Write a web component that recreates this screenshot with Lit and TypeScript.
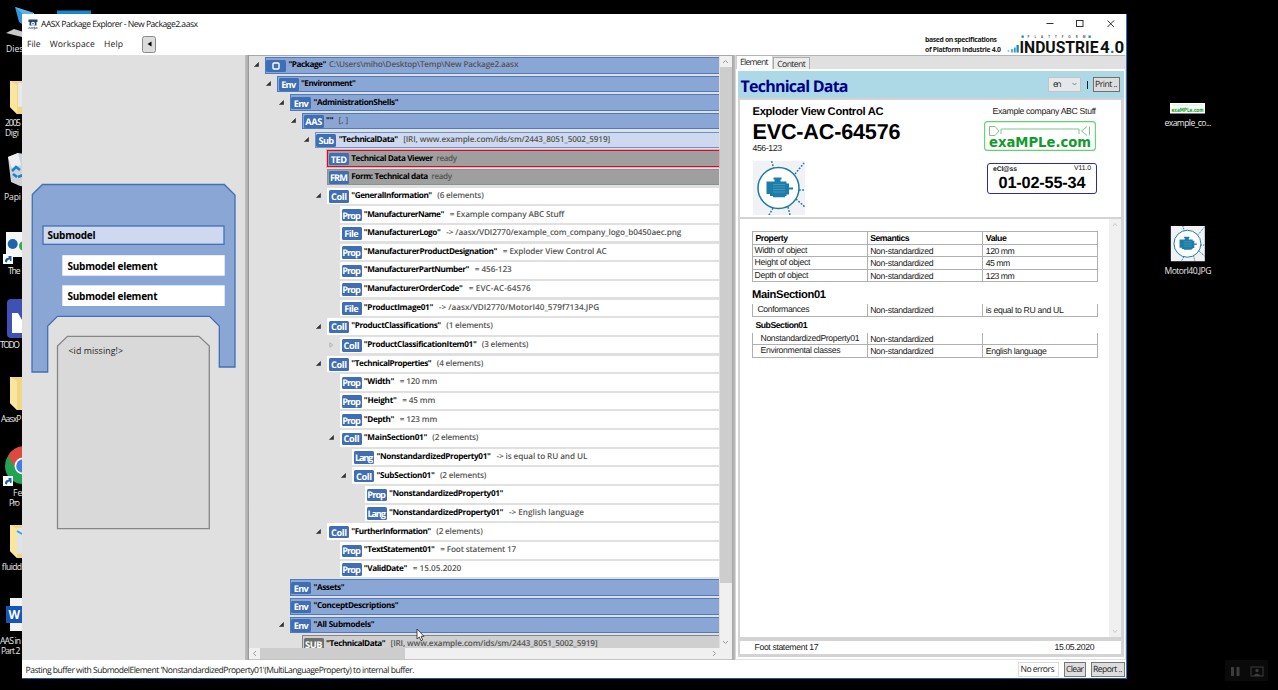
import { LitElement, html, css, svg, nothing } from "lit";
import { customElement, property } from "lit/decorators.js";

/** A line of text tracked so that it spans a given width. */
@customElement("fit-text")
class FitText extends LitElement {
  @property() text = "";
  @property({ type: Number }) w = 0;
  static styles = css`
    :host { display: inline-block; white-space: pre; text-rendering: geometricPrecision; }
    span { display: inline-block; }
  `;
  render() { return html`<span>${this.text}</span>`; }
  updated() {
    const s = this.renderRoot.querySelector("span") as HTMLElement;
    s.style.letterSpacing = "0px";
    const n = s.getBoundingClientRect().width;
    const len = Math.max(1, this.text.length - 1);
    s.style.letterSpacing = (this.w - n) / len + "px";
    this.style.width = this.w + "px";
  }
}

const t = (text: string, w: number) => html`<fit-text .text=${text} .w=${w}></fit-text>`;

type Row = [level: number, badge: string, open: number, kind: string, name: string, nameW: number, gap?: number, extra?: string, extraW?: number];
const rows: Row[] = [
  [0, "", 1, "env", '"Package"', 38, 2.5, "C:\\Users\\miho\\Desktop\\Temp\\New Package2.aasx", 189.5],
  [1, "Env", 1, "env", '"Environment"', 55],
  [2, "Env", 1, "env", '"AdministrationShells"', 85],
  [3, "AAS", 1, "env", '""', 7.5, 5, "[, ]", 9.5],
  [4, "Sub", 1, "sub", '"TechnicalData"', 59.5, 5, "[IRI, www.example.com/ids/sm/2443_8051_5002_5919]", 207],
  [5, "TED", 0, "plug sel", "Technical Data Viewer", 82, 3, "ready", 21],
  [5, "FRM", 0, "plug", "Form: Technical data", 77, 3, "ready", 21],
  [5, "Coll", 1, "", '"GeneralInformation"', 81, 5, "(6 elements)", 46.5],
  [6, "Prop", 0, "", '"ManufacturerName"', 80.5, 5.5, "= Example company ABC Stuff", 114.5],
  [6, "File", 0, "", '"ManufacturerLogo"', 77, 5.5, "-> /aasx/VDI2770/example_com_company_logo_b0450aec.png", 235],
  [6, "Prop", 0, "", '"ManufacturerProductDesignation"', 133.5, 5.5, "= Exploder View Control AC", 104],
  [6, "Prop", 0, "", '"ManufacturerPartNumber"', 105.5, 5.5, "= 456-123", 37],
  [6, "Prop", 0, "", '"ManufacturerOrderCode"', 99, 6, "= EVC-AC-64576", 62],
  [6, "File", 0, "", '"ProductImage01"', 69.5, 5.5, "-> /aasx/VDI2770/MotorI40_579f7134.JPG", 160.5],
  [5, "Coll", 1, "", '"ProductClassifications"', 90, 5, "(1 elements)", 46.5],
  [6, "Coll", 2, "", '"ProductClassificationItem01"', 113, 5, "(3 elements)", 46.5],
  [5, "Coll", 1, "", '"TechnicalProperties"', 80.5, 5, "(4 elements)", 46.5],
  [6, "Prop", 0, "", '"Width"', 30.5, 5.5, "= 120 mm", 37.5],
  [6, "Prop", 0, "", '"Height"', 33, 5.5, "= 45 mm", 33],
  [6, "Prop", 0, "", '"Depth"', 30.5, 5.5, "= 123 mm", 37.5],
  [6, "Coll", 1, "", '"MainSection01"', 63.5, 5, "(2 elements)", 46],
  [7, "Lang", 0, "", '"NonstandardizedProperty01"', 114.5, 5.5, "-> is equal to RU and UL", 91],
  [7, "Coll", 1, "", '"SubSection01"', 58.5, 5, "(2 elements)", 46.5],
  [8, "Prop", 0, "", '"NonstandardizedProperty01"', 114.5],
  [8, "Lang", 0, "", '"NonstandardizedProperty01"', 114.5, 5.5, "-> English language", 75],
  [5, "Coll", 1, "", '"FurtherInformation"', 80, 5, "(2 elements)", 46.5],
  [6, "Prop", 0, "", '"TextStatement01"', 71, 5.5, "= Foot statement 17", 76],
  [6, "Prop", 0, "", '"ValidDate"', 43.5, 5.5, "= 15.05.2020", 48.5],
  [2, "Env", 0, "env", '"Assets"', 31],
  [2, "Env", 0, "env", '"ConceptDescriptions"', 85],
  [2, "Env", 1, "env", '"All Submodels"', 61],
  [3, "SUB", 0, "ref", '"TechnicalData"', 59.5, 5, "[IRI, www.example.com/ids/sm/2443_8051_5002_5919]", 207],
];

const badgeWidths: Record<string, number> = { Env: 15, AAS: 17, Sub: 15.5, TED: 16.5, FRM: 18, Coll: 16, Prop: 18.6, File: 14.5, Lang: 18.4, SUB: 17.5 };

const motor = svg`
  <rect width="52" height="54" fill="#f0f2f5"/>
  <g stroke="#1d7ba3" stroke-width="1.5" stroke-dasharray="1.8 1.4" fill="none">
    <path d="M21 8L18.500 0M42 13L51 2M46 29H52M43 38L52 46M35 46L37 54M20 47L16 54"/>
  </g>
  <circle cx="25.500" cy="27" r="20.500" fill="#fff" stroke="#1d7ba3" stroke-width="1.500"/>
  <path fill="#1b7da8" d="M13.500 20.500h8v-2h-1v-2h8v2h-1v2h6v2h2.500v4h4v2h-4v5h-2.500v1.500h-1.500v1.200h-12v-1.200h-3v-2h-3.500z"/>
  <path stroke="#4f9dc0" stroke-width=".8" d="M20 23.500h12M20 26h12M20 28.500h12M20 31h12"/>
`;

@customElement("desktop-icons")
class DesktopIcons extends LitElement {
  static styles = css`
    :host { display: block; }
    svg { display: block; }
    text { font: 8.6px "Open Sans", sans-serif; fill: #e8e8e8; }
    .w { font-weight: 700; font-size: 12px; fill: #fff; }
    .ex { font: bold 6px "DejaVu Sans", sans-serif; fill: #15a52a; }
  `;
  render() {
    const link = (y: number) => svg`<rect x="3" y=${y} width="10" height="10" fill="#fff"/><path d=${`M5 ${y + 8}q0-4 2.500-4h1v-2h3v5h-1.500v-1.500q-3 0-3 3z`} fill="#1f5fa8"/>`;
    return html`<svg width="1278" height="690">
      <rect width="1278" height="690" fill="#000"/>
      <path d="M15 7L34 13V32L19 22z" fill="#3595d8"/><path d="M15 7L34 13V24z" fill="#5cb4ec"/>
      <path d="M6 33L14 29L30 34V38L22 37z" fill="#c9c9c9"/>
      <rect x="57" y="10.500" width="34" height="4" fill="#1787d2"/>
      <path d="M10 81H30V114H17L10 107z" fill="#f3d684"/><path d="M18 83H30V105L18 107z" fill="#e9e9e9"/><path d="M10 81L17 85V114L10 107z" fill="#fbe6a0"/>
      <path d="M8 157l10-4 12 2v32l-10-1-9-4z" fill="#cfd3d6"/><path d="M8 157l10-4 3 12-9 3z" fill="#eceeef"/>
      <g fill="none" stroke="#1583d6" stroke-width="2.600"><path d="M12 171l4-4 4 3M13 174l4 3M18 177l5-2"/></g>
      <rect x="6" y="232" width="22" height="25" fill="#f6f6f6"/><circle cx="12.700" cy="244" r="5" fill="#1e63b0"/><circle cx="24" cy="246" r="5" fill="#2fae4b"/>
      ${link(254)}
      <rect x="7" y="299" width="30" height="39" rx="4" fill="#3f51b5"/><path d="M12 313h6l4 7v13H12z" fill="#fff"/>
      <path d="M10 377H30V410H17L10 403z" fill="#f3d684"/><path d="M10 377L17 381V410L10 403z" fill="#fbe6a0"/>
      <circle cx="23" cy="466" r="18" fill="#20a353"/><path d="M8 456A18 18 0 0 1 40 456L20 464L14 466z" fill="#dc4a3d"/><circle cx="23" cy="466" r="8.500" fill="#fff"/><circle cx="23" cy="466" r="6.800" fill="#3f7de0"/>
      ${link(476)}
      <path d="M10 525H30V558H17L10 551z" fill="#f3d684"/><path d="M17 528H30V552L17 554z" fill="#dfe4e8"/><path d="M10 525L17 529V558L10 551z" fill="#fbe6a0"/><path d="M17 531l5 3" stroke="#3aa0d8" stroke-width="2"/>
      <rect x="10" y="598" width="20" height="33" fill="#f2f2f2"/><rect x="6" y="606" width="24" height="17" fill="#1556b8"/><text x="8.500" y="619" class="w">W</text>
      <text x="6" y="52">Dies</text><text x="5" y="126" textLength="16">2005</text><text x="5" y="136" textLength="14">Digi</text>
      <text x="4" y="200" textLength="17">Papi</text><text x="8" y="274" textLength="12.500">The</text><text x="0" y="348" textLength="20">TODO</text>
      <text x="1" y="422" textLength="20.500">AasxP</text><text x="13" y="496">Fe</text><text x="9" y="506" textLength="11">Pro</text>
      <text x="1" y="570" textLength="20.500">fluidd</text><text x="0" y="644" textLength="21">AAS in</text><text x="1" y="654" textLength="19.500">Part 2</text>
      <rect x="1170" y="103" width="35" height="10.500" fill="#fff"/><path d="M1172 105h31" stroke="#b9e6bf" stroke-width=".7"/>
      <text x="1171.500" y="111.500" class="ex" textLength="32" lengthAdjust="spacingAndGlyphs">exaMPLe.com</text>
      <text x="1164.500" y="126" textLength="47">example_co...</text>
      <svg x="1170.500" y="226" width="34.500" height="35.500" viewBox="0 0 52 54">${motor}</svg>
      <text x="1164.500" y="274" textLength="47">MotorI40.JPG</text>
      <rect x="1225" y="660" width="43" height="21" fill="#0a0a0a"/>
      <path d="M1231 667h3v9h-3zM1236.500 667h3v9h-3z" fill="#3c3c3c"/>
      <rect x="1251" y="667" width="12" height="9" fill="none" stroke="#3c3c3c"/><circle cx="1257" cy="670.500" r="1.700" fill="#3c3c3c"/><path d="M1253 676q4-5 8 0z" fill="#3c3c3c"/>
    </svg>`;
  }
}

@customElement("shell-diagram")
class ShellDiagram extends LitElement {
  static styles = css`
    :host { display: block; }
    svg { display: block; }
    text { font: 8.8px "Open Sans", sans-serif; fill: #222; }
    .b { font-weight: 700; font-size: 10px; fill: #000; }
  `;
  render() {
    return html`<svg width="223" height="604" viewBox="22 55 223 604">
      <path d="M32.300 194.500L42.500 184.500H224.300L235 195V367H219.300V326L209.500 316.300H57.500L47.700 326V372H32z" fill="#8aa6d4" stroke="#4170b4" stroke-width="1.300"/>
      <rect x="43" y="226" width="181" height="18.300" fill="#ced9ef" stroke="#4170b4" stroke-width="1.300"/>
      <rect x="62.300" y="255.200" width="162.400" height="20.500" fill="#fff"/>
      <rect x="62.300" y="285.300" width="162.400" height="20.700" fill="#fff"/>
      <path d="M57.500 346L67.500 336.300H199L209.300 346V528.700H57.500z" fill="#d9d9d9" stroke="#868686" stroke-width="1.300"/>
      <text class="b" x="47.500" y="239.300" textLength="48">Submodel</text>
      <text class="b" x="67.500" y="269.500" textLength="90">Submodel element</text>
      <text class="b" x="67.500" y="299.500" textLength="90">Submodel element</text>
      <text x="68.500" y="353.600" textLength="54.500">&lt;id missing!&gt;</text>
    </svg>`;
  }
}

@customElement("package-tree")
class PackageTree extends LitElement {
  static styles = css`
    :host { display: grid; grid-template-columns: 470.500px 12px; grid-template-rows: 592px 12px; font: 600 8.2px "Open Sans", sans-serif; color: #555; background: #e0e0e0; box-sizing: border-box; border-top: 1px solid #a8a8a8; }
    .view { overflow: hidden; padding-top: 1px; }
    .row { height: 18.667px; display: flex; }
    .tog { width: 15.500px; flex: none; display: flex; align-items: center; justify-content: center; box-sizing: border-box; padding: 0 1.500px 3px 0; }
    .box { flex: 1; height: 16.500px; box-sizing: border-box; display: flex; align-items: center; background: #fff; border: 1px solid #fff; border-right: 0; margin-right: 1px; padding-left: .6px; line-height: 14px; }
    .env { background: #8aa6d4; border-color: #4d7bbd; }
    .sub { background: #ced9ef; border-color: #6a93c8; }
    .plug { background: #9f9f9f; border-color: #8b9495; }
    .sel { border-color: #c8102e; box-shadow: 0 0 0 1px #eda9b5; }
    .ref { background: #cfcfcf; border-color: #858585; }
    .badge { width: 20px; height: 12.500px; border-radius: 1.500px; background: #3f6eb5; color: #fff; font-weight: 700; font-size: 9.2px; line-height: 13px; display: flex; justify-content: center; align-items: center; margin: 1px 2.300px 0 0; }
    .ref .badge { background: #6f6f6f; }
    .name { color: #000; font-weight: 700; margin-right: var(--gap); display: flex; }
    .v { background: #f0f0f0; display: flex; flex-direction: column; }
    .v .thumb { height: 516px; background: #cdcdcd; }
    .arrow { height: 10.500px; display: flex; align-items: center; justify-content: center; }
    .grow { flex: 1; }
    .h { background: #f0f0f0; display: flex; grid-column: 1 / 3; border-bottom: 1px solid #c4c4c4; box-sizing: border-box; }
    .h .arrow { width: 11px; height: 11px; }
    .h .thumb { width: 145px; background: #cdcdcd; }
    .last { margin-right: 12px; }
    svg { display: block; }
  `;
  render() {
    const arrow = (d: string) => html`<svg width="7" height="7" fill="none" stroke="#999"><path d=${d} /></svg>`;
    return html`
      <div class="view">${rows.map(([lv, badge, open, kind, name, nw, gap, extra, ew]) => html`
        <div class="row">
          <div class="tog" style="margin-left:${lv * 12.57}px">
            ${open === 1 ? html`<svg width="5" height="5"><path d="M4.600 .4V4.600H.4z" fill="#333" stroke="#222" stroke-width=".5"/></svg>`
              : open === 2 ? html`<svg width="5" height="6"><path d="M.8 .8L3.800 3L.8 5.200z" fill="none" stroke="#aaa" stroke-width=".8"/></svg>` : nothing}
          </div>
          <div class="box ${kind}">
            <span class="badge">${badge ? t(badge, badgeWidths[badge]) : html`<svg width="8" height="8"><rect x="1" y="1" width="6" height="6" rx="1" fill="none" stroke="#fff" stroke-width="1.400"/></svg>`}</span>
            <span class="name" style="--gap:${gap ?? 0}px">${t(name, nw)}</span>
            ${extra ? t(extra, ew ?? 0) : nothing}
          </div>
        </div>`)}
      </div>
      <div class="v"><div class="arrow">${arrow("M1 5L3.500 2.500L6 5")}</div><div class="thumb"></div><div class="grow"></div><div class="arrow">${arrow("M1 2L3.500 4.500L6 2")}</div></div>
      <div class="h"><div class="arrow">${arrow("M5 1L2.500 3.500L5 6")}</div><div class="thumb"></div><div class="grow"></div><div class="arrow last">${arrow("M2 1L4.500 3.500L2 6")}</div></div>`;
  }
}

@customElement("data-sheet")
class DataSheet extends LitElement {
  static styles = css`
    :host { display: block; font: 8.700px "Liberation Sans", sans-serif; color: #222; background: #e0e0e0; padding-right: 1px; box-sizing: border-box; }
    svg { display: block; }
    .tabs { height: 14px; display: flex; align-items: flex-end; font: 8.600px "Open Sans", sans-serif; border-top: 1px solid #b5b5b5; box-sizing: border-box; }
    .tab { height: 12.500px; box-sizing: border-box; border: 1px solid #acacac; border-bottom: 0; padding: 0 3.300px; line-height: 12px; background: #ececec; }
    .on { height: 13.500px; background: #fff; border-top: 0; border-color: #d0d0d0; line-height: 12px; padding: 0 3.500px 0 3px; }
    .body { background: #fff; padding: 2px 1px 1px 1.500px; height: 590px; box-sizing: border-box; }
    .frame { background: #d3d3d3; height: 586px; }
    .head { height: 26.500px; background: #add8e6; display: flex; align-items: center; padding: 0 4px 0 3px; box-sizing: border-box; font: 8.600px "Open Sans", sans-serif; }
    .title { font-size: 16px; font-weight: 700; color: #00008b; margin: 3px auto 0 0; line-height: 20px; }
    .lang { width: 33px; height: 15px; box-sizing: border-box; border: 1px solid #c4c4c4; background: #e5e8ea; display: flex; align-items: center; justify-content: space-between; padding: 0 3px 0 4px; }
    .bar { width: 1px; height: 8px; background: #123; margin: 1px 5px 0 6px; }
    .btn { box-sizing: border-box; height: 15px; border: 1px solid #707070; background: #dddddd; padding: 0 1px; line-height: 12px; width: 26.500px; }
    .card { background: #fff; margin: 0 3px 0 2.500px; }
    .gap { height: 2.100px; }
    .top { height: 117.500px; display: flex; justify-content: space-between; padding: 0 24.500px 0 12.500px; box-sizing: border-box; }
    .left { padding-top: 6.500px; }
    .left span { display: flex; }
    .l1 { font-size: 11.200px; font-weight: 700; color: #000; line-height: 13px; }
    .l2 { font-size: 21.600px; font-weight: 700; color: #000; line-height: 23px; margin-top: .5px; }
    .l3 { line-height: 10px; margin-bottom: 8.500px; }
    .right { padding-top: 6px; display: flex; flex-direction: column; align-items: flex-end; width: 112px; line-height: 10px; }
    .logo { margin: 5px 0 12px; }
    .brand { font: bold 14px "DejaVu Sans", sans-serif; fill: #129b2c; }
    .class { width: 110px; height: 31px; box-sizing: border-box; border: 1.300px solid #2e2c9a; border-radius: 3px; padding: 1px 5px 0; margin-right: -1px; }
    .cl { display: flex; justify-content: space-between; font-size: 6.800px; line-height: 8px; }
    .cl b { color: #222; }
    .num { font-size: 16.300px; font-weight: 700; line-height: 18px; color: #000; padding-left: 5.500px; display: flex; }
    .main { height: 418px; margin-top: 2px; display: flex; }
    .doc { flex: 1; padding: 12.300px 0 0 12px; }
    .scroll { width: 12px; background: #f0f0f0; display: flex; flex-direction: column; justify-content: space-between; align-items: center; padding: 3px 0; box-sizing: border-box; }
    .tr { display: grid; grid-template-columns: 114.700px 115.600px 115.200px; height: 12.600px; width: 345.500px; border-left: 1px solid #b0b0b0; border-bottom: 1px solid #b0b0b0; box-sizing: border-box; }
    .tr > span { border-right: 1px solid #b0b0b0; padding: 1px 0 0 2.500px; line-height: 11px; box-sizing: border-box; display: flex; }
    .tr > span:first-child { padding-top: 0; padding-left: var(--in, 1px); }
    .th { border-top: 1px solid #b0b0b0; height: 13.300px; font-weight: 700; color: #000; }
    .th > span:first-child { padding-top: 1px; }
    .h1 { font-size: 11.200px; font-weight: 700; color: #000; line-height: 13px; padding-top: 6.500px; height: 22px; box-sizing: border-box; display: flex; }
    .h2 { font-weight: 700; color: #000; padding: 3px 0 0 3.500px; line-height: 11px; height: 15.800px; box-sizing: border-box; display: flex; }
    .foot { height: 13.500px; margin-top: 3.800px; display: flex; justify-content: space-between; align-items: center; padding: 0 26px 1.500px 14.500px; box-sizing: border-box; }
  `;
  render() {
    const ns = t("Non-standardized", 63.5);
    const tr = (a: unknown, v: unknown, ind = 1.5) => html`<div class="tr" style="--in:${ind}px"><span>${a}</span><span>${ns}</span><span>${v}</span></div>`;
    return html`
      <div class="tabs"><div class="tab on">${t("Element", 28.5)}</div><div class="tab">${t("Content", 28.5)}</div></div>
      <div class="body"><div class="frame">
        <div class="head"><span class="title">${t("Technical Data", 108)}</span>
          <span class="lang">${t("en", 8.5)}<svg width="5" height="4"><path d="M.5 1L2.500 3L4.500 1" fill="none" stroke="#666" stroke-width=".8"/></svg></span>
          <span class="bar"></span><span class="btn">${t("Print ..", 22.5)}</span></div>
        <div class="gap"></div>
        <div class="card top">
          <div class="left">
            <span class="l1">${t("Exploder View Control AC", 131)}</span>
            <span class="l2">${t("EVC-AC-64576", 148)}</span>
            <span class="l3">${t("456-123", 29.5)}</span>
            <svg width="52" height="54">${motor}</svg>
          </div>
          <div class="right">
            ${t("Example company ABC Stuff", 103.5)}
            <svg class="logo" width="112" height="30"><rect x=".6" y=".6" width="110.800" height="28.800" rx="3" fill="none" stroke="#5fd36d" stroke-width="1.100"/>
              <path d="M5.500 5.500H11L15 10L11 14.500H5.500zM17 13V8H95V13M105.500 5.500V14.500M103 5.500L97.500 10L103 14.500" fill="none" stroke="#69c276" stroke-width=".9"/>
              <text class="brand" x="5" y="25.500" textLength="102" lengthAdjust="spacingAndGlyphs">exaMPLe.com</text></svg>
            <div class="class"><div class="cl"><b>${t("eCl@ss", 24)}</b>${t("V11.0", 17)}</div><div class="num">${t("01-02-55-34", 87)}</div></div>
          </div>
        </div>
        <div class="card main">
          <div class="doc">
            <div class="tr th" style="--in:2.500px"><span>${t("Property", 32.5)}</span><span>${t("Semantics", 39.5)}</span><span>${t("Value", 21)}</span></div>
            ${tr(t("Width of object", 53), t("120 mm", 29))}
            ${tr(t("Height of object", 56), t("45 mm", 24.5))}
            ${tr(t("Depth of object", 54), t("123 mm", 29))}
            <div class="h1">${t("MainSection01", 74)}</div>
            ${tr(t("Conformances", 52), t("is equal to RU and UL", 78), 4.5)}
            <div class="h2">${t("SubSection01", 52)}</div>
            ${tr(t("NonstandardizedProperty01", 99), "", 7.5)}
            ${tr(t("Environmental classes", 80), t("English language", 61), 7.5)}
          </div>
          <div class="scroll"><svg width="6" height="5" fill="none" stroke="#ccc"><path d="M1 4L3 1.500L5 4"/></svg><svg width="6" height="5" fill="none" stroke="#ccc"><path d="M1 1L3 3.500L5 1"/></svg></div>
        </div>
        <div class="card foot">${t("Foot statement 17", 64)}${t("15.05.2020", 40)}</div>
      </div></div>`;
  }
}

@customElement("app-root")
class AppRoot extends LitElement {
  static styles = css`
    :host { display: block; position: relative; width: 1278px; height: 690px; overflow: hidden; background: #000; font: 8.600px "Open Sans", sans-serif; color: #222; }
    svg { display: block; }
    .win { position: absolute; left: 22px; top: 14px; width: 1104.500px; height: 665px; box-sizing: border-box; background: #fff; border-right: 1px solid #1878c8; border-bottom: 1px solid #1c5c96; display: grid; grid-template-rows: 41px 604px 19px; }
    .bar { display: flex; justify-content: space-between; }
    .title { display: flex; align-items: center; height: 20px; padding-left: 5.500px; gap: 3.500px; color: #111; }
    .menu { display: flex; align-items: center; height: 20.500px; padding-left: 5px; }
    .menu > fit-text { margin-right: 9.300px; }
    .back { margin-left: 10px; width: 13.500px; height: 17.500px; box-sizing: border-box; border: 1px solid #8a8a8a; border-radius: 2.500px; background: #dcdcdc; display: flex; align-items: center; justify-content: center; }
    .spec { font: 700 6.900px "Open Sans", sans-serif; fill: #222; }
    .ind { font: 700 16.800px Roboto, sans-serif; fill: #111; }
    .dot { fill: #1488b8; }
    .plat { font: 700 3px "Open Sans", sans-serif; fill: #555; }
    .cols { display: grid; grid-template-columns: 223px 4px 482.500px 4.500px 1fr; }
    .side { background: #e0e0e0; }
    .split { background: linear-gradient(90deg, #bdbdbd, #b2b2b2 60%, #8f8f8f); }
    .split2 { background: linear-gradient(90deg, #a6a6a6, #b8b8b8 60%, #e4e4e4); }
    .status { display: flex; align-items: center; padding: 2px 1px 0 3.500px; }
    .status .msg { margin-right: auto; }
    .err { border: 1px solid #dcdcdc; box-sizing: border-box; height: 14.500px; line-height: 12.500px; width: 41px; padding-left: 2px; margin-right: 5px; }
    .btn { border: 1px solid #777; background: #ddd; box-sizing: border-box; height: 14.500px; line-height: 12.500px; padding: 0 1.500px; }
    .b1 { width: 22px; margin-right: 5px; }
    .b2 { width: 34px; }
    .cursor { position: absolute; left: 416px; top: 628px; }
  `;
  render() {
    return html`
      <desktop-icons></desktop-icons>
      <div class="win">
        <div class="bar">
          <div>
            <div class="title">
              <svg width="10" height="11"><path d="M.5 .5h9v2.500h-1v3.500H1.500V3h-1z" fill="#24486b"/><circle cx="5" cy="4.800" r="2" fill="#fff"/><circle cx="5" cy="4.800" r=".8" fill="#24486b"/><path d="M.5 10L1.500 8L2.500 10M3 10L4 8L5 10M7 8.200H5.800V9H7V10H5.500M7.500 8L9.500 10M9.500 8L7.500 10" fill="none" stroke="#3f6287" stroke-width=".7"/></svg>
              ${t("AASX Package Explorer - New Package2.aasx", 157)}
            </div>
            <div class="menu">${t("File", 13.5)}${t("Workspace", 45)}${t("Help", 19)}
              <span class="back"><svg width="5" height="6"><path d="M4.500 .5V5.500L.5 3z" fill="#000"/></svg></span></div>
          </div>
          <svg width="206" height="41" viewBox="920 14 206 41">
            <path d="M1046.500 23.500h7" stroke="#333" fill="none"/><rect x="1076.500" y="20.500" width="6.500" height="6" stroke="#333" fill="none"/><path d="M1107.500 20.500l6.500 6.500M1114 20.500l-6.500 6.500" stroke="#333" fill="none"/>
            <text class="spec" x="925" y="42.400" textLength="72">based on specifications</text>
            <text class="spec" x="925" y="51.600" textLength="76">of Platform Industrie 4.0</text>
            <path d="M1007.500 50h2v2h-2z" fill="#9cc9dc"/><path d="M1011 49h2.300v3.500h-2.300z" fill="#5fb2d0"/><path d="M1014 47.500h1.700v5h-1.700z" fill="#2b9ac4"/><path d="M1016.500 45h2.300v7.500h-2.300z" fill="#1488b8"/>
            <rect x="1021.500" y="35.500" width="2.300" height="2.300" fill="#1488b8"/><rect x="1088.500" y="35.500" width="2.300" height="2.300" fill="#1488b8"/>
            <text class="plat" x="1027.500" y="37.600" textLength="58">PLATTFORM</text>
            <text class="ind" x="1019.500" y="52.500" textLength="79" lengthAdjust="spacingAndGlyphs">INDUSTRIE</text>
            <text class="ind" x="1100" y="52.500" textLength="24.300" lengthAdjust="spacingAndGlyphs">4<tspan class="dot">.</tspan>0</text>
          </svg>
        </div>
        <div class="cols">
          <div class="side"><shell-diagram></shell-diagram></div>
          <div class="split"></div>
          <package-tree></package-tree>
          <div class="split2"></div>
          <data-sheet></data-sheet>
        </div>
        <div class="status">
          <span class="msg">${t("Pasting buffer with SubmodelElement 'NonstandardizedProperty01'(MultiLanguageProperty) to internal buffer.", 389)}</span>
          <span class="err">${t("No errors", 34)}</span><span class="btn b1">${t("Clear", 18)}</span><span class="btn b2">${t("Report ..", 29.5)}</span>
        </div>
      </div>
      <svg class="cursor" width="9" height="14"><path d="M1 1V11L3.300 9L5 12.700L6.700 12L5 8.300H8z" fill="#fff" stroke="#222" stroke-width=".8"/></svg>`;
  }
}
